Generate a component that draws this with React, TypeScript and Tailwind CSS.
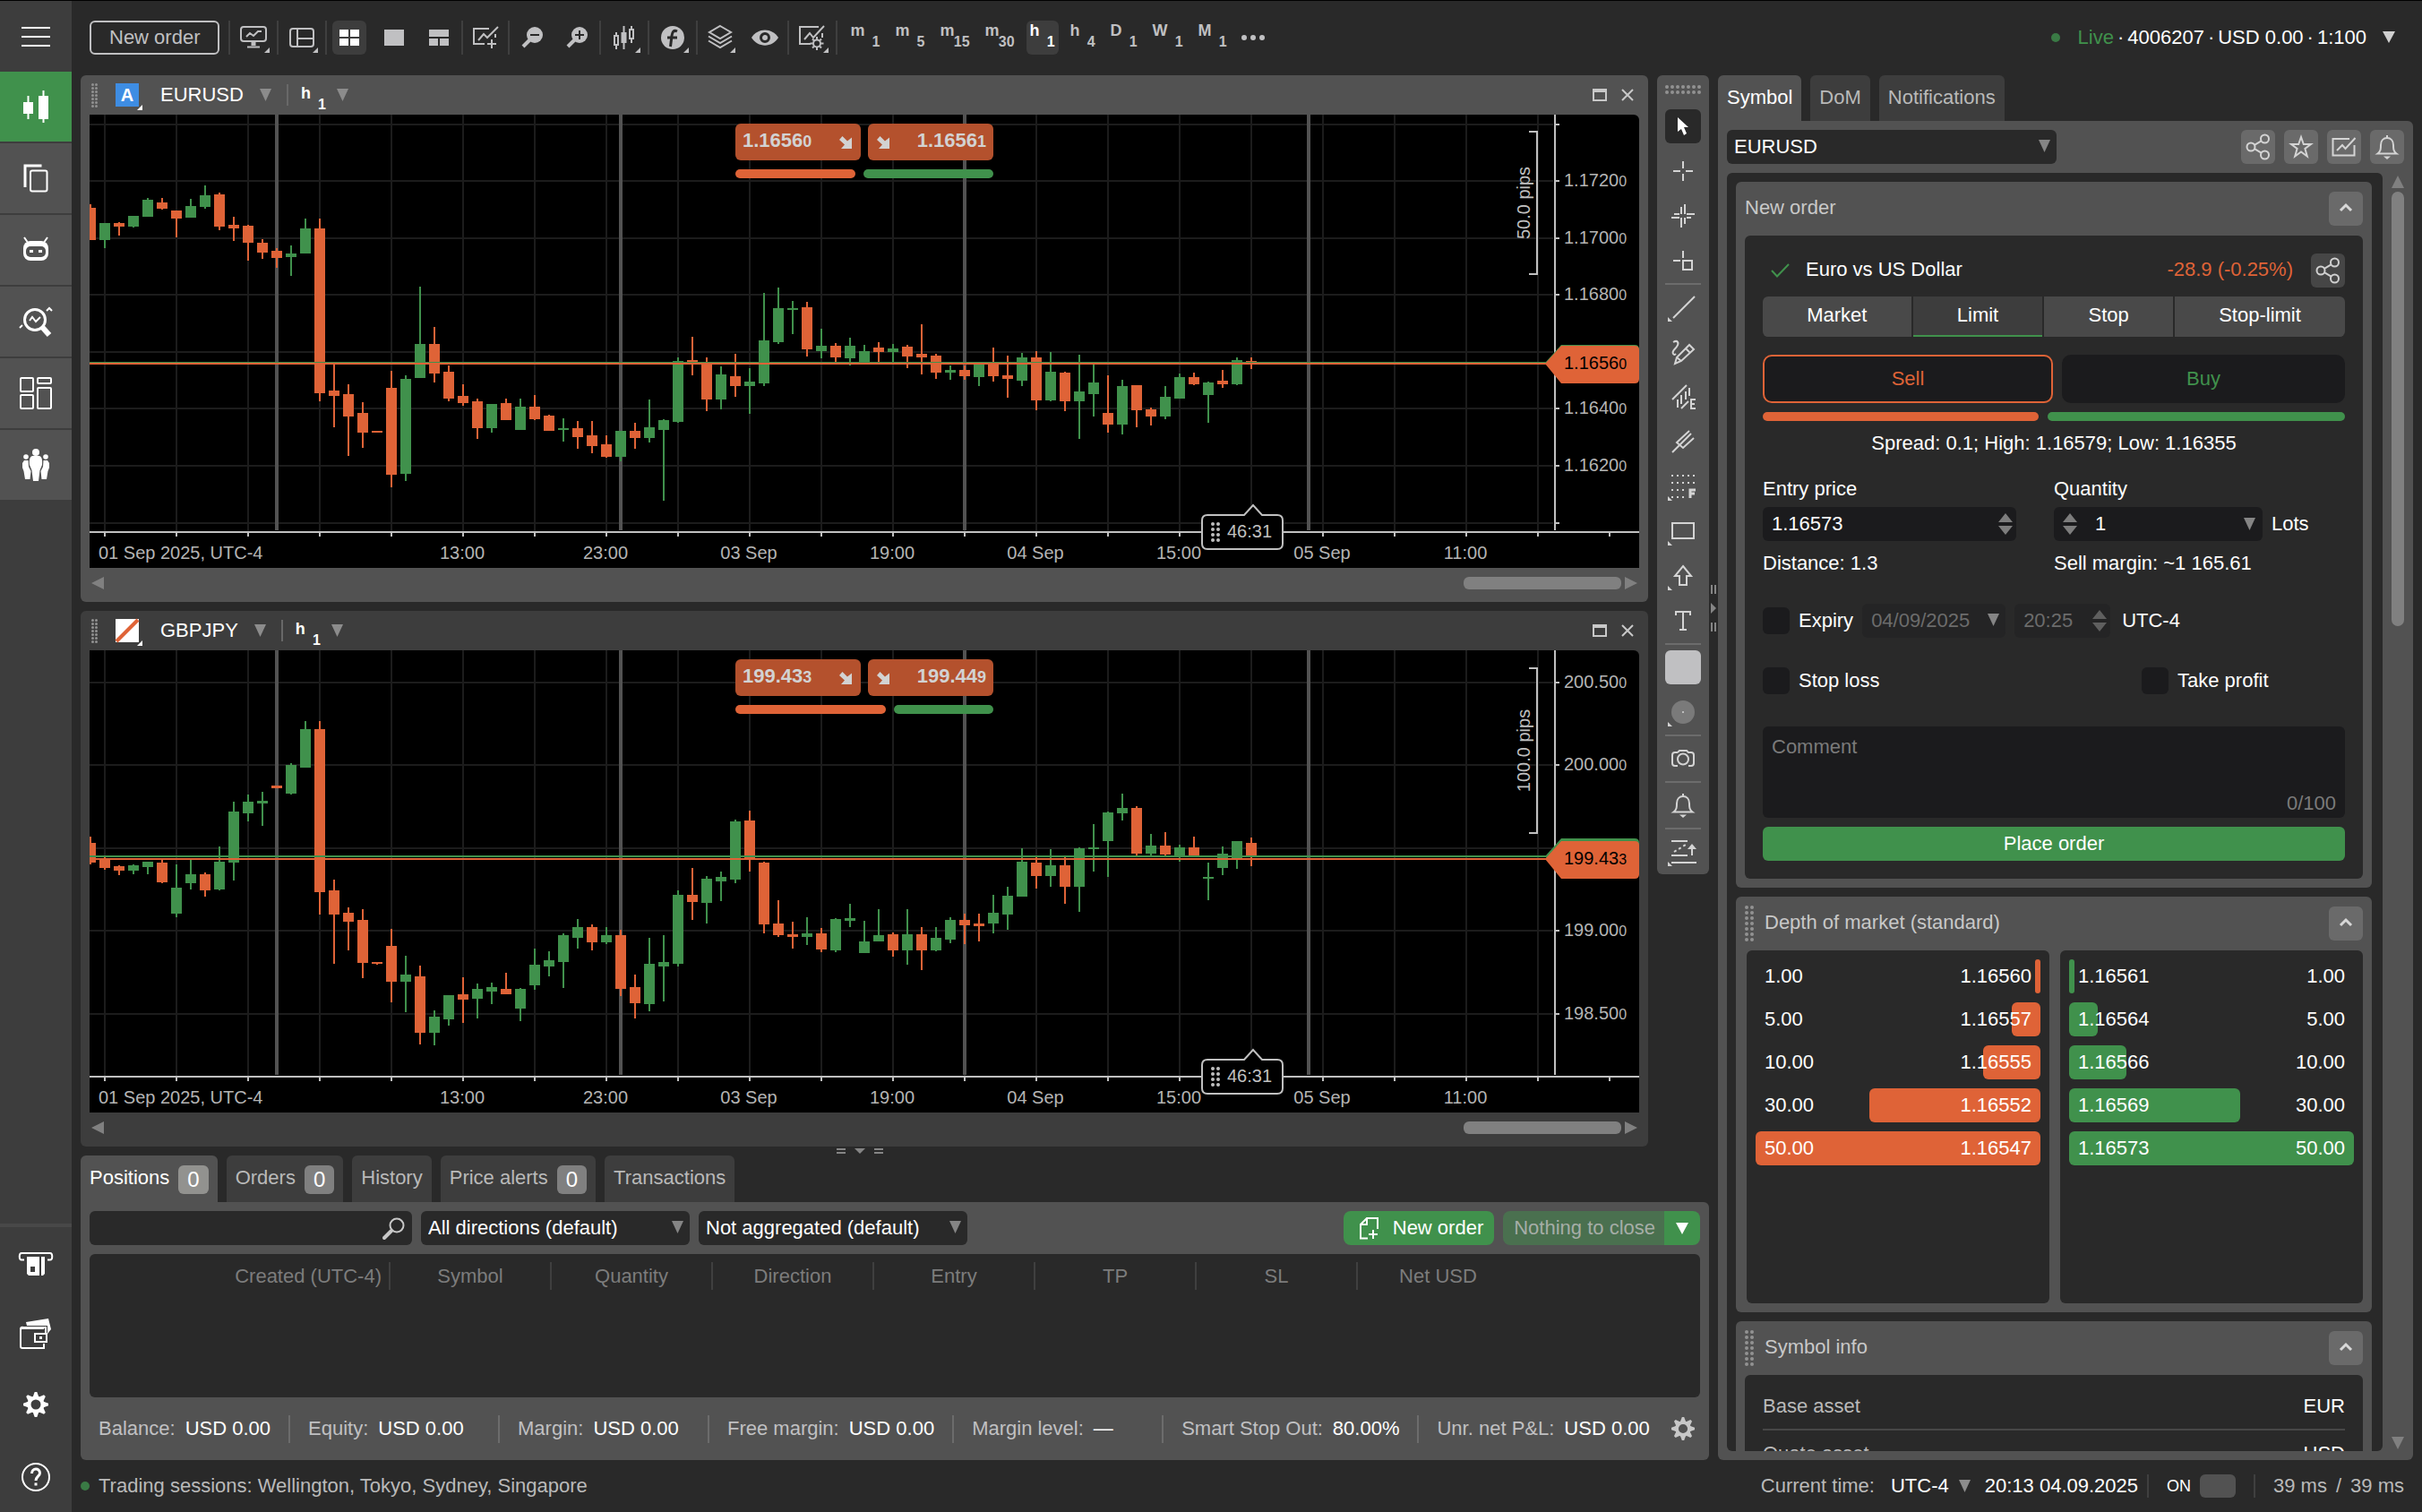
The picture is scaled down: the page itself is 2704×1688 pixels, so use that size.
import React from "react";

/* ------------------------------------------------------------------ */
/* Small shared pieces                                                 */
/* ------------------------------------------------------------------ */

type SvgProps = {
  w: number;
  h: number;
  children: React.ReactNode;
  className?: string;
  sw?: number;
};

function Svg({ w, h, children, className = "", sw = 2 }: SvgProps) {
  return (
    <svg
      width={w}
      height={h}
      viewBox={`0 0 ${w} ${h}`}
      fill="none"
      stroke="currentColor"
      strokeWidth={sw}
      aria-hidden="true"
      className={`shrink-0 overflow-visible ${className}`}
    >
      {children}
    </svg>
  );
}

function Caret({ className = "text-[#8c8c8c]" }: { className?: string }) {
  return (
    <Svg w={13} h={14} className={className}>
      <path d="M0 0H13L6.5 14Z" fill="currentColor" stroke="none" />
    </Svg>
  );
}

function Stepper({ className = "text-[#7d7d7d]" }: { className?: string }) {
  return (
    <Svg w={16} h={24} className={className}>
      <path d="M0 10L8 0L16 10ZM0 14H16L8 24Z" fill="currentColor" stroke="none" />
    </Svg>
  );
}

function Dots({ cols, rows, step, r }: { cols: number; rows: number; step: number; r: number }) {
  const items = [];
  for (let c = 0; c < cols; c++) {
    for (let i = 0; i < rows; i++) {
      items.push(<circle key={`${c}-${i}`} cx={r + c * step} cy={r + i * step} r={r} fill="currentColor" stroke="none" />);
    }
  }
  return (
    <Svg w={(cols - 1) * step + 2 * r} h={(rows - 1) * step + 2 * r} className="text-[#929292]">
      {items}
    </Svg>
  );
}

/* ------------------------------------------------------------------ */
/* Icons                                                               */
/* ------------------------------------------------------------------ */

const ShareIcon = () => (
  <Svg w={26} h={28}>
    <circle cx="20.5" cy="5" r="4.5" />
    <circle cx="5" cy="14" r="4.5" />
    <circle cx="20.5" cy="23" r="4.5" />
    <path d="M9 11.8L16.5 7.3M9 16.2L16.5 20.7" />
  </Svg>
);

const StarIcon = () => (
  <Svg w={26} h={26}>
    <path d="M13 2L15.8 10H24L17.4 15L19.8 23.5L13 18.5L6.2 23.5L8.6 15L2 10H10.2Z" />
  </Svg>
);

const ChartIcon = () => (
  <Svg w={28} h={22}>
    <path d="M20 2H1.500V20.500H25.500V9" />
    <path d="M6 15L12 9L15.500 13L26.500 1" />
  </Svg>
);

const BellIcon = () => (
  <Svg w={24} h={28}>
    <path d="M12 1V4" />
    <path d="M1.500 21.500C5 19 5 16 5 12C5 7 8 4 12 4S19 7 19 12C19 16 19 19 22.500 21.500Z" />
    <path d="M8 24.500H16L12 28Z" fill="currentColor" stroke="none" />
  </Svg>
);

const GearIcon = ({ size = 28 }: { size?: number }) => (
  <svg
    width={size}
    height={size}
    viewBox="0 0 28 28"
    aria-hidden="true"
    fill="none"
    stroke="currentColor"
    className="shrink-0"
  >
    <circle cx="14" cy="14" r="7.500" strokeWidth="4" />
    {[0, 45, 90, 135, 180, 225, 270, 315].map((a) => (
      <path key={a} d="M10.500 6L12.700 0H15.300L17.500 6Z" fill="currentColor" stroke="none" transform={`rotate(${a} 14 14)`} />
    ))}
  </svg>
);

const ChevronUp = () => (
  <Svg w={14} h={10} sw={3}>
    <path d="M1 9L7 3L13 9" />
  </Svg>
);

const zigzagFrame = (
  <>
    <path d="M22 2H1V21H13" />
    <path d="M6 16L12 9L16 14L28 1" />
    <path d="M26 9V14" />
  </>
);

const toolbarIcons = {
  monitor: (
    <Svg w={30} h={25}>
      <rect x="1" y="1" width="28" height="16" rx="3" />
      <path d="M7 12L11 8L15 11L20 6L24 6" />
      <path d="M15 17V22" strokeWidth="5" />
      <path d="M8 23.500H22" />
    </Svg>
  ),
  layout: (
    <Svg w={28} h={22}>
      <rect x="1" y="1" width="26" height="20" rx="3" />
      <path d="M9 1V21M9 12H27" />
    </Svg>
  ),
  grid: (
    <Svg w={22} h={18}>
      <path d="M0 0H10V8H0ZM12 0H22V8H12ZM0 10H10V18H0ZM12 10H22V18H12Z" fill="currentColor" stroke="none" />
    </Svg>
  ),
  single: (
    <Svg w={22} h={18}>
      <path d="M0 0H22V18H0Z" fill="currentColor" stroke="none" />
    </Svg>
  ),
  split: (
    <Svg w={22} h={18}>
      <path d="M0 0H22V8H0ZM0 10H10V18H0ZM12 10H22V18H12Z" fill="currentColor" stroke="none" />
    </Svg>
  ),
  chartAdd: (
    <Svg w={29} h={25}>
      <path d="M18 3H1V20H13" />
      <path d="M6 16L12 9L16 13L28 1" />
      <path d="M25 9V13M21 15V25M16 20H26" />
    </Svg>
  ),
  zoomOut: (
    <Svg w={24} h={24}>
      <circle cx="15" cy="9" r="9" fill="currentColor" stroke="none" />
      <path d="M10 14L2 22" strokeWidth="4" />
      <path d="M10 9H20" className="stroke-[#292929]" />
    </Svg>
  ),
  zoomIn: (
    <Svg w={24} h={24}>
      <circle cx="15" cy="9" r="9" fill="currentColor" stroke="none" />
      <path d="M10 14L2 22" strokeWidth="4" />
      <path d="M10 9H20M15 4V14" className="stroke-[#292929]" />
    </Svg>
  ),
  candles: (
    <Svg w={24} h={26}>
      <path d="M3 7V12M3 22V26M11.500 0V26M20 0V4M20 14V19" />
      <rect x="1" y="11" width="4" height="10" />
      <rect x="8.500" y="7" width="6" height="12" fill="currentColor" stroke="none" />
      <rect x="18" y="4" width="4" height="10" />
    </Svg>
  ),
  indicator: (
    <Svg w={28} h={28}>
      <circle cx="14" cy="14" r="13" fill="currentColor" stroke="none" />
      <path d="M19 7C15 5 13.500 8 13 12L11.500 24M8 14H19" className="stroke-[#292929]" strokeWidth="3" />
    </Svg>
  ),
  layers: (
    <Svg w={28} h={27}>
      <path d="M14 1L26 8L14 15L2 8Z" />
      <path d="M1 12.500L14 20L27 12.500M1 17.500L14 25L27 17.500" />
    </Svg>
  ),
  eye: (
    <Svg w={30} h={18}>
      <path d="M0 9C7 -2.500 23 -2.500 30 9C23 20.500 7 20.500 0 9Z" fill="currentColor" stroke="none" />
      <circle cx="15" cy="9" r="4.500" className="stroke-[#292929]" strokeWidth="3" />
    </Svg>
  ),
  chartGear: (
    <Svg w={30} h={27}>
      {zigzagFrame}
      <circle cx="20" cy="20.500" r="4" />
      <path d="M20 13V16M20 25V28M12.500 20.500H15.500M24.500 20.500H27.500M15 15.500L17 17.500M25 15.500L23 17.500M15 25.500L17 23.500M25 25.500L23 23.500" />
    </Svg>
  ),
};

/* ------------------------------------------------------------------ */
/* Left sidebar                                                        */
/* ------------------------------------------------------------------ */

const sideTop: { label: string; icon: React.ReactNode; active?: boolean }[] = [
  {
    label: "Trade",
    active: true,
    icon: (
      <Svg w={28} h={36}>
        <path d="M0 13H11V26H0ZM17 6H28V32H17Z" fill="currentColor" stroke="none" />
        <path d="M5.500 6V32M22.500 0V36" />
      </Svg>
    ),
  },
  {
    label: "Copy",
    icon: (
      <Svg w={28} h={32} sw={3}>
        <path d="M20.500 2H2V26" />
        <rect x="8" y="7.500" width="18.500" height="23" rx="2" strokeWidth="2" />
      </Svg>
    ),
  },
  {
    label: "Algo",
    icon: (
      <Svg w={28} h={28}>
        <path d="M1 0L4.500 5M27 0L23.500 5" />
        <rect x="0" y="4" width="28" height="22" rx="8" fill="currentColor" stroke="none" />
        <rect x="3" y="10" width="22" height="12" rx="5" className="fill-[#525252]" stroke="none" />
        <path d="M7 14H11V17H7ZM17 14H21V17H17Z" fill="currentColor" stroke="none" />
      </Svg>
    ),
  },
  {
    label: "Analyze",
    icon: (
      <Svg w={38} h={32}>
        <circle cx="18" cy="14" r="11.500" strokeWidth="3" />
        <path d="M26 22L34 31" strokeWidth="6" />
        <path d="M12 15L15 11L19 16L24 11" />
        <path d="M31 4L34 1L37 4M1 23L4 20" />
      </Svg>
    ),
  },
  {
    label: "Layouts",
    icon: (
      <Svg w={36} h={36}>
        <rect x="1" y="1" width="14" height="15" rx="1" />
        <rect x="20" y="1" width="15" height="6" rx="1" />
        <rect x="1" y="20" width="14" height="15" rx="1" />
        <rect x="20" y="12" width="15" height="23" rx="1" />
      </Svg>
    ),
  },
  {
    label: "Community",
    icon: (
      <Svg w={30} h={36}>
        <g fill="currentColor" stroke="none">
          <circle cx="15" cy="4" r="4" />
          <path d="M11 8H19C22 9 22.500 13 22 18L19.500 24L18 36H12L10.500 24L8 18C7.500 13 8 9 11 8Z" />
          <circle cx="4" cy="9" r="2.800" />
          <path d="M2 13H6.500L7 20L9.500 25L8.500 34H3L1.500 25L0 21V16Z" />
          <circle cx="26" cy="9" r="2.800" />
          <path d="M28 13H23.500L23 20L20.500 25L21.500 34H27L28.500 25L30 21V16Z" />
        </g>
      </Svg>
    ),
  },
];

const sideBottom: { label: string; icon: React.ReactNode; cls: string }[] = [
  {
    label: "Deposit",
    cls: "h-[82px]",
    icon: (
      <Svg w={38} h={27}>
        <path d="M6 8.500H3C0 8.500 0 1 3 1H35C38 1 38 8.500 35 8.500H32" />
        <path d="M9 5H23V26H11L9 24ZM25 5H29V24L27 26H25Z" fill="currentColor" stroke="none" />
        <path d="M13 16H18V22H13Z" className="fill-[#3d3d3d]" stroke="none" />
      </Svg>
    ),
  },
  {
    label: "Wallet",
    cls: "h-[74px]",
    icon: (
      <Svg w={36} h={34}>
        <path d="M26 10V11H2.500C1 11 1 12 1 13V31C1 33 2 33 3 33H27V28" />
        <path d="M1 12C1 9 3 10 6 10H29V17" />
        <rect x="17" y="17" width="13" height="9" />
        <path d="M22 20H25V23H22Z" fill="currentColor" stroke="none" />
        <path d="M7 4L32 0L35 12L31 17V8H8Z" fill="currentColor" stroke="none" />
      </Svg>
    ),
  },
  { label: "Settings", cls: "h-[84px]", icon: <GearIcon /> },
  {
    label: "Help",
    cls: "h-[78px]",
    icon: (
      <Svg w={32} h={32}>
        <circle cx="16" cy="16" r="15" />
        <path d="M11.500 12C11.500 5.500 20.500 5.500 20.500 11.500C20.500 15 16 15.500 16 20" strokeWidth="3" />
        <path d="M14.500 22.500H17.500V25.500H14.500Z" fill="currentColor" stroke="none" />
      </Svg>
    ),
  },
];

function Sidebar() {
  return (
    <aside className="flex w-20 shrink-0 flex-col bg-[#3d3d3d] text-white">
      <button aria-label="Menu" className="flex h-[79px] items-center justify-center">
        <Svg w={32} h={24}>
          <path d="M0 2H32M0 12H32M0 22H32" />
        </Svg>
      </button>
      <nav className="flex flex-col gap-[2px]">
        {sideTop.map((s) => (
          <button
            key={s.label}
            aria-label={s.label}
            className={`flex h-[78px] items-center justify-center ${s.active ? "bg-[#40914c]" : "bg-[#525252]"}`}
          >
            {s.icon}
          </button>
        ))}
      </nav>
      <nav className="mt-auto flex flex-col border-t-4 border-[#484848]">
        {sideBottom.map((s) => (
          <button key={s.label} aria-label={s.label} className={`flex items-center justify-center ${s.cls}`}>
            {s.icon}
          </button>
        ))}
      </nav>
    </aside>
  );
}

/* ------------------------------------------------------------------ */
/* Top toolbar                                                         */
/* ------------------------------------------------------------------ */

type IconName = keyof typeof toolbarIcons;

const toolbarGroups: { name: IconName; label: string; menu?: boolean; wide?: boolean; active?: boolean }[][] = [
  [{ name: "monitor", label: "Workspaces", menu: true, wide: true }],
  [{ name: "layout", label: "Panels", menu: true, wide: true }],
  [
    { name: "grid", label: "Multi-chart", active: true },
    { name: "single", label: "Single chart" },
    { name: "split", label: "Free charts" },
  ],
  [{ name: "chartAdd", label: "Add chart" }],
  [
    { name: "zoomOut", label: "Zoom out" },
    { name: "zoomIn", label: "Zoom in" },
  ],
  [{ name: "candles", label: "Chart type", menu: true, wide: true }],
  [{ name: "indicator", label: "Indicators", menu: true, wide: true }],
  [
    { name: "layers", label: "Objects", menu: true },
    { name: "eye", label: "Visibility" },
  ],
  [{ name: "chartGear", label: "Chart settings", menu: true, wide: true }],
];

const timeframes: [string, string][] = [
  ["m", "1"],
  ["m", "5"],
  ["m", "15"],
  ["m", "30"],
  ["h", "1"],
  ["h", "4"],
  ["D", "1"],
  ["W", "1"],
  ["M", "1"],
];

function Timeframe({ unit, count }: { unit: string; count: string }) {
  return (
    <span className="flex h-[38px] items-start font-bold leading-5">
      <span className="mt-px text-[18px]">{unit}</span>
      <span className="mt-[14px] flex w-[17px] justify-end text-[16px]">{count}</span>
    </span>
  );
}

function CornerMark() {
  return (
    <Svg w={6} h={6} className="absolute bottom-[2px] right-[2px]">
      <path d="M6 0V6H0Z" fill="currentColor" stroke="none" />
    </Svg>
  );
}

function Separator() {
  return <span className="h-[38px] w-[2px] shrink-0 bg-[#3f3f3f]" />;
}

function TopBar() {
  return (
    <header className="flex h-[83px] shrink-0 items-center pb-[2px] pl-5 pr-[30px] text-[#c0c0c2]">
      <button className="h-[38px] rounded-md border-2 border-[#c0c0c2] px-5">New order</button>
      <div className="ml-[10px] flex items-center gap-[6px]">
        {toolbarGroups.map((group, i) => (
          <React.Fragment key={i}>
            <Separator />
            <div className="flex gap-3">
              {group.map((b) => (
                <button
                  key={b.name}
                  aria-label={b.label}
                  className={`relative flex h-[38px] items-center justify-center rounded-md ${b.wide ? "w-10" : "w-[38px]"} ${
                    b.active ? "bg-[#3d3d3d] text-white" : ""
                  }`}
                >
                  {toolbarIcons[b.name]}
                  {b.menu && <CornerMark />}
                </button>
              ))}
            </div>
          </React.Fragment>
        ))}
        <Separator />
      </div>
      <div className="ml-[10px] flex items-center gap-[9px]">
        {timeframes.map(([unit, count]) => {
          const active = unit === "h" && count === "1";
          return (
            <button key={unit + count} className={`rounded-md px-1 ${active ? "bg-[#3d3d3d] text-white" : ""}`}>
              <Timeframe unit={unit} count={count} />
            </button>
          );
        })}
        <button aria-label="More timeframes" className="flex h-[38px] w-8 items-center justify-center">
          <Svg w={26} h={6}>
            <path d="M3 3h.01M13 3h.01M23 3h.01" strokeWidth="6" strokeLinecap="round" />
          </Svg>
        </button>
      </div>
      <button className="ml-auto flex items-center gap-1 text-white">
        <span className="mr-4 size-[10px] rounded-full bg-[#3a7a45]" />
        <span className="text-[#40914c]">Live</span>
        <span>·</span>
        <span>4006207</span>
        <span>·</span>
        <span>USD 0.00</span>
        <span>·</span>
        <span>1:100</span>
        <Svg w={14} h={13} className="ml-[14px] text-[#d0d0d0]">
          <path d="M0 0H14L7 13Z" fill="currentColor" stroke="none" />
        </Svg>
      </button>
    </header>
  );
}

/* ------------------------------------------------------------------ */
/* Charts                                                              */
/* ------------------------------------------------------------------ */

/* direction, high, body top, body bottom, low: scale steps below the origin */
type Candle = ["u" | "d", number, number, number, number];

const STEPS_PER_PIXEL = 2.8;

const eurusd: Candle[] = [
  ["d", 302, 314, 414, 414], ["u", 361, 361, 414, 440], ["d", 358, 361, 372, 400], ["u", 339, 339, 372, 375],
  ["u", 283, 288, 342, 342], ["d", 283, 297, 316, 319], ["d", 322, 322, 347, 406], ["u", 286, 308, 344, 344],
  ["u", 244, 274, 311, 316], ["d", 266, 272, 372, 384], ["d", 342, 367, 378, 417], ["d", 367, 370, 423, 479],
  ["d", 412, 423, 454, 473], ["d", 440, 448, 470, 501], ["u", 431, 456, 468, 526], ["u", 347, 378, 456, 456],
  ["d", 347, 378, 893, 918], ["d", 800, 885, 902, 1000], ["d", 865, 896, 966, 1089], ["d", 921, 955, 1016, 1064],
  ["d", 1011, 1011, 1016, 1016], ["d", 823, 876, 1148, 1187], ["u", 837, 848, 1145, 1168], ["u", 560, 739, 846, 846],
  ["d", 686, 739, 832, 860], ["d", 806, 826, 910, 918], ["d", 865, 902, 924, 932], ["d", 910, 918, 1002, 1036],
  ["u", 927, 927, 1002, 1016], ["d", 910, 924, 977, 977], ["u", 910, 935, 1008, 1008], ["d", 899, 935, 974, 977],
  ["d", 960, 963, 1011, 1011], ["u", 972, 1002, 1008, 1044], ["d", 980, 1002, 1030, 1067], ["d", 980, 1025, 1058, 1081],
  ["d", 1025, 1053, 1092, 1095], ["u", 1011, 1011, 1092, 1106], ["d", 986, 1011, 1033, 1067], ["u", 913, 1000, 1033, 1047],
  ["u", 974, 977, 1008, 1229], ["u", 781, 792, 983, 986], ["d", 717, 790, 797, 837], ["d", 781, 797, 913, 949],
  ["u", 809, 834, 913, 944], ["d", 770, 840, 871, 904], ["u", 815, 857, 871, 958], ["u", 580, 728, 862, 871],
  ["u", 563, 627, 734, 739], ["u", 605, 627, 633, 708], ["d", 608, 624, 756, 778], ["u", 692, 745, 762, 784],
  ["d", 736, 745, 781, 795], ["u", 720, 745, 784, 806], ["u", 742, 762, 800, 800], ["d", 734, 750, 764, 795],
  ["u", 739, 753, 764, 797], ["d", 742, 748, 778, 815], ["d", 678, 770, 781, 834], ["d", 770, 776, 829, 848],
  ["u", 806, 820, 829, 851], ["d", 806, 820, 840, 851], ["u", 800, 800, 843, 871], ["d", 750, 800, 840, 857],
  ["d", 776, 837, 848, 907], ["u", 767, 781, 854, 871], ["d", 762, 781, 916, 946], ["u", 764, 826, 916, 918],
  ["d", 826, 829, 918, 949], ["u", 773, 888, 918, 1036], ["u", 804, 860, 896, 966], ["d", 837, 955, 991, 1016],
  ["u", 851, 871, 991, 1022], ["d", 868, 868, 946, 1000], ["d", 938, 944, 966, 994], ["u", 871, 904, 966, 974],
  ["u", 832, 843, 910, 910], ["d", 829, 843, 865, 868], ["u", 857, 860, 899, 986], ["d", 820, 854, 865, 876],
  ["u", 781, 790, 865, 868], ["d", 781, 792, 795, 818],
];

const gbpjpy: Candle[] = [
  ["d", 599, 619, 680, 686], ["d", 664, 669, 697, 703], ["d", 689, 692, 706, 720], ["u", 686, 689, 706, 717],
  ["u", 678, 678, 694, 717], ["d", 672, 680, 742, 745], ["u", 686, 759, 840, 851], ["u", 672, 717, 745, 764],
  ["d", 711, 717, 767, 787], ["u", 630, 678, 764, 767], ["u", 490, 521, 680, 736], ["u", 468, 490, 526, 552],
  ["u", 459, 487, 496, 566], ["d", 440, 440, 448, 448], ["u", 370, 375, 465, 468], ["u", 238, 263, 384, 384],
  ["d", 238, 263, 773, 843], ["d", 734, 767, 843, 997], ["d", 820, 837, 865, 955], ["d", 826, 860, 994, 1042],
  ["d", 991, 991, 997, 1000], ["d", 888, 941, 1053, 1117], ["u", 972, 1030, 1053, 1148], ["d", 1002, 1036, 1212, 1249],
  ["u", 1142, 1162, 1212, 1252], ["u", 1095, 1095, 1170, 1190], ["d", 1039, 1092, 1109, 1182], ["u", 1058, 1075, 1106, 1168],
  ["u", 1056, 1070, 1084, 1123], ["d", 1025, 1075, 1092, 1092], ["u", 1072, 1075, 1137, 1176], ["u", 949, 1000, 1064, 1078],
  ["u", 958, 986, 1005, 1036], ["u", 902, 907, 991, 1072], ["u", 857, 882, 916, 949], ["d", 874, 882, 930, 955],
  ["u", 882, 907, 930, 935], ["d", 890, 907, 1075, 1098], ["d", 1030, 1070, 1120, 1168], ["u", 916, 997, 1123, 1145],
  ["u", 907, 991, 1005, 1114], ["u", 767, 781, 997, 1005], ["d", 697, 781, 804, 860], ["u", 722, 731, 806, 871],
  ["u", 708, 725, 739, 801], ["u", 546, 552, 734, 745], ["d", 518, 549, 672, 708], ["d", 678, 680, 874, 902],
  ["d", 798, 871, 907, 913], ["d", 865, 904, 913, 949], ["u", 851, 902, 913, 938], ["d", 885, 902, 952, 960],
  ["u", 854, 857, 955, 960], ["u", 809, 854, 862, 882], ["u", 862, 927, 963, 963], ["u", 826, 907, 927, 927],
  ["d", 899, 904, 955, 974], ["u", 826, 904, 955, 1000], ["d", 882, 904, 955, 1016], ["u", 882, 916, 955, 958],
  ["u", 851, 860, 921, 932], ["d", 840, 860, 876, 935], ["d", 840, 871, 879, 927], ["u", 781, 837, 871, 902],
  ["u", 756, 784, 843, 890], ["u", 636, 678, 787, 787], ["d", 664, 680, 722, 762], ["u", 638, 689, 722, 756],
  ["d", 664, 689, 756, 809], ["u", 633, 636, 756, 834], ["u", 560, 633, 637, 708], ["u", 521, 524, 613, 725],
  ["u", 465, 510, 526, 549], ["d", 504, 510, 652, 658], ["u", 591, 627, 652, 664], ["d", 585, 627, 655, 664],
  ["u", 624, 633, 661, 678], ["d", 599, 633, 664, 664], ["u", 680, 725, 731, 798], ["u", 630, 652, 697, 720],
  ["u", 613, 613, 669, 700], ["d", 602, 619, 661, 692],
];

const timeLabels: [number, string][] = [
  [416, "13:00"],
  [576, "23:00"],
  [736, "03 Sep"],
  [896, "19:00"],
  [1056, "04 Sep"],
  [1216, "15:00"],
  [1376, "05 Sep"],
  [1536, "11:00"],
];

type ChartData = {
  symbol: string;
  height: number;
  origin: number;
  candles: Candle[];
  gridY: number[];
  priceLabels: [number, string][];
  askY: number;
  askH: number;
  bidY: number;
  tagTop: number;
  tagGreen: number;
  bid: string;
  ask: string;
  ruler: [number, number, string];
  sellShare: number;
};

const charts: ChartData[] = [
  {
    symbol: "EURUSD",
    height: 506,
    origin: 8,
    candles: eurusd,
    gridY: [11, 74, 138, 201, 265, 328, 392, 456],
    priceLabels: [[74, "1.17200"], [138, "1.17000"], [201, "1.16800"], [328, "1.16400"], [392, "1.16200"]],
    askY: 276,
    askH: 1,
    bidY: 277,
    tagTop: 258,
    tagGreen: 257,
    bid: "1.16560",
    ask: "1.16561",
    ruler: [19, 178, "50.0 pips"],
    sellShare: 48,
  },
  {
    symbol: "GBPJPY",
    height: 516,
    origin: 6,
    candles: gbpjpy,
    gridY: [36, 128, 221, 313, 406],
    priceLabels: [[36, "200.500"], [128, "200.000"], [313, "199.000"], [406, "198.500"]],
    askY: 229,
    askH: 2,
    bidY: 232,
    tagTop: 213,
    tagGreen: 210,
    bid: "199.433",
    ask: "199.449",
    ruler: [20, 204, "100.0 pips"],
    sellShare: 60,
  },
];

const tagPath = (top: number, bottom: number, tip: number) =>
  `M1625 ${tip}L1643 ${top}H1725Q1730 ${top} 1730 ${top + 5}V${bottom - 5}Q1730 ${bottom} 1725 ${bottom}H1643Z`;

function PriceText({ x, y, value, className }: { x: number; y: number; value: string; className: string }) {
  return (
    <text x={x} y={y} className={`text-[20px] ${className}`}>
      {value.slice(0, -1)}
      <tspan className="text-[16px]">{value.slice(-1)}</tspan>
    </text>
  );
}

function Plot({ c }: { c: ChartData }) {
  const axis = c.height - 40;
  const toY = (v: number) => Math.round(v / STEPS_PER_PIXEL - c.origin);
  const tip = c.bidY + 1;
  return (
    <svg viewBox={`0 0 1730 ${c.height}`} className="block h-auto w-full rounded-tr-md bg-black" role="img" aria-label={`${c.symbol} chart`}>
      {c.gridY.map((y) => (
        <g key={y}>
          <rect x={0} y={y - 1} width={1634} height={2} className="fill-[#1c1c1c]" />
          <rect x={1636} y={y - 1} width={5} height={2} className="fill-[#c0c0c0]" />
        </g>
      ))}
      {Array.from({ length: 22 }, (_, i) => 17 + i * 80).map((x) => (
        <g key={x}>
          {x < 1630 && <rect x={x - 1} y={0} width={2} height={axis} className="fill-[#1c1c1c]" />}
          <rect x={x - 1} y={axis} width={2} height={5} className="fill-[#c0c0c0]" />
        </g>
      ))}
      {[209, 593, 977, 1361].map((x) => (
        <rect key={x} x={x - 2} y={0} width={4} height={axis - 2} className="fill-[#525252]" />
      ))}
      {c.candles.map(([dir, hi, top, bottom, lo], i) => {
        const x = 1 + i * 16;
        return (
          <g key={i} className={dir === "u" ? "fill-[#40914c]" : "fill-[#df6337]"}>
            <rect x={x - 1} y={toY(hi)} width={2} height={Math.max(2, toY(lo) - toY(hi))} />
            <rect x={x - 6} y={toY(top)} width={12} height={Math.max(2, toY(bottom) - toY(top))} />
          </g>
        );
      })}
      <rect x={0} y={c.askY} width={1628} height={c.askH} className="fill-[#40914c]" />
      <rect x={0} y={c.bidY} width={1628} height={2} className="fill-[#df6337]" />
      <rect x={0} y={axis - 1} width={1730} height={2} className="fill-[#c0c0c0]" />
      <rect x={1635} y={0} width={2} height={axis - 2} className="fill-[#c0c0c0]" />

      <g className="fill-[#b4b4b4]">
        <text x={10} y={axis + 30} className="text-[20px]">
          01 Sep 2025, UTC-4
        </text>
        {timeLabels.map(([x, t]) => (
          <text key={x} x={x} y={axis + 30} textAnchor="middle" className="text-[20px]">
            {t}
          </text>
        ))}
      </g>
      {c.priceLabels.map(([y, v]) => (
        <PriceText key={y} x={1646} y={y + 6} value={v} className="fill-[#b4b4b4]" />
      ))}

      <path
        d={`M1607 ${c.ruler[0]}H1616V${c.ruler[1]}H1607`}
        fill="none"
        strokeWidth={2}
        className="stroke-[#c0c0c0]"
      />
      <text
        transform={`translate(1608 ${(c.ruler[0] + c.ruler[1]) / 2}) rotate(-90)`}
        textAnchor="middle"
        className="fill-[#c0c0c0] text-[20px]"
      >
        {c.ruler[2]}
      </text>

      <path d={tagPath(c.tagGreen, c.tagTop + 38, c.askY + 1)} className="fill-[#40914c]" />
      <path d={tagPath(c.tagTop, c.tagTop + 42, tip)} className="fill-[#df6337]" />
      <PriceText x={1646} y={tip + 6} value={c.bid} className="fill-black" />

      <path
        d={`M1248 ${axis - 19}H1289L1299 ${axis - 30}L1309 ${axis - 19}H1326Q1332 ${axis - 19} 1332 ${axis - 13}V${axis + 13}Q1332 ${
          axis + 19
        } 1326 ${axis + 19}H1248Q1242 ${axis + 19} 1242 ${axis + 13}V${axis - 13}Q1242 ${axis - 19} 1248 ${axis - 19}Z`}
        strokeWidth={2}
        className="fill-black stroke-[#c0c0c0]"
      />
      {[1254, 1260].map((x) =>
        [-9, -3, 3, 9].map((dy) => <circle key={`${x}${dy}`} cx={x} cy={axis + dy} r={2} className="fill-[#c0c0c0]" />),
      )}
      <text x={1270} y={axis + 6} className="fill-[#c0c0c0] text-[20px]">
        46:31
      </text>
    </svg>
  );
}

function QuoteArrow() {
  return (
    <Svg w={14} h={14}>
      <path d="M3.500 0L9 5.500L14 1.500V14H2L6 9.500L0 4Z" fill="currentColor" stroke="none" />
    </Svg>
  );
}

function QuoteValue({ value }: { value: string }) {
  return (
    <span className="font-bold">
      {value.slice(0, -1)}
      <span className="text-[18px]">{value.slice(-1)}</span>
    </span>
  );
}

function ChartWindow({ c, active }: { c: ChartData; active: boolean }) {
  return (
    <section className={`rounded-md px-[10px] ${active ? "bg-[#525252]" : "bg-[#3d3d3d]"}`}>
      <div className="flex h-11 items-center pl-[2px] text-white">
        <Dots cols={2} rows={7} step={4} r={1.5} />
        <button aria-label={`${c.symbol} chart mode`} className="relative ml-5">
          {active ? (
            <span className="flex size-[26px] items-center justify-center bg-[#3e8de3] text-[20px] font-bold">A</span>
          ) : (
            <Svg w={26} h={26} sw={4}>
              <path d="M0 0H26V26H0Z" fill="#fff" stroke="none" />
              <path d="M1 25L25 1" className="stroke-[#df6337]" />
            </Svg>
          )}
          <Svg w={6} h={6} className="absolute -bottom-1 -right-1">
            <path d="M6 0V6H0Z" fill="currentColor" stroke="none" />
          </Svg>
        </button>
        <button className="ml-6 flex items-center gap-[18px] pb-px">
          <span>{c.symbol}</span>
          <Caret />
        </button>
        <span className="ml-[17px] h-6 w-[2px] bg-[#686868]" />
        <button className="ml-[14px] flex items-center gap-3">
          <span className="mt-[11px]">
            <Timeframe unit="h" count="1" />
          </span>
          <Caret />
        </button>
        <button aria-label={`Maximize ${c.symbol}`} className="ml-auto text-[#c8c8c8]">
          <Svg w={16} h={14}>
            <rect x="1" y="1" width="14" height="12" />
            <path d="M1 2.500H15" strokeWidth="3" />
          </Svg>
        </button>
        <button aria-label={`Close ${c.symbol}`} className="ml-4 mr-[6px] text-[#c8c8c8]">
          <Svg w={14} h={14}>
            <path d="M1 1L13 13M13 1L1 13" />
          </Svg>
        </button>
      </div>
      <div className="relative">
        <Plot c={c} />
        <div className="absolute left-1/2 top-[10px] w-72 -translate-x-1/2">
          <div className="flex gap-2 text-[#d2d2d2]">
            <button
              aria-label={`Sell ${c.symbol}`}
              className="flex h-[41px] flex-1 items-center justify-between rounded-md bg-[#b4512d] pb-[2px] pl-2 pr-[10px]"
            >
              <QuoteValue value={c.bid} />
              <span className="pt-[3px]">
                <QuoteArrow />
              </span>
            </button>
            <button
              aria-label={`Buy ${c.symbol}`}
              className="flex h-[41px] flex-1 items-center justify-between rounded-md bg-[#b4512d] pb-[2px] pl-[10px] pr-2"
            >
              <span className="pt-[3px]">
                <QuoteArrow />
              </span>
              <QuoteValue value={c.ask} />
            </button>
          </div>
          <div className="mt-[10px] flex gap-[9px]">
            <span className="h-[10px] rounded-full bg-[#df6337]" style={{ width: `${c.sellShare * 0.97}%` }} />
            <span className="h-[10px] flex-1 rounded-full bg-[#40914c]" />
          </div>
        </div>
      </div>
      <div className="flex h-[38px] items-start pl-[2px] pr-[2px] pt-[10px] text-[#808080]">
        <Svg w={14} h={14}>
          <path d="M14 0V14L0 7Z" fill="currentColor" stroke="none" />
        </Svg>
        <span className="ml-auto h-[14px] w-44 rounded-md bg-[#808080]" />
        <Svg w={14} h={14} className="ml-1">
          <path d="M0 0V14L14 7Z" fill="currentColor" stroke="none" />
        </Svg>
      </div>
    </section>
  );
}

/* ------------------------------------------------------------------ */
/* Drawing tools                                                       */
/* ------------------------------------------------------------------ */

type Tool = { label: string; icon: React.ReactNode; menu?: boolean; active?: boolean };

const toolGroups: Tool[][] = [
  [
    {
      label: "Cursor",
      active: true,
      icon: (
        <Svg w={14} h={20}>
          <path d="M1 0L13 11H8L11 18L8 20L5 13L1 16Z" fill="currentColor" stroke="none" />
        </Svg>
      ),
    },
    {
      label: "Crosshair",
      icon: (
        <Svg w={22} h={22}>
          <path d="M11 0V8M11 14V22M0 11H8M14 11H22" />
        </Svg>
      ),
    },
    {
      label: "Synced crosshair",
      icon: (
        <Svg w={26} h={26}>
          <path d="M11 3V11M11 15V26M15 0V11M15 15V22M0 15H9M17 15H22M3 11H9M17 11H26" />
        </Svg>
      ),
    },
    {
      label: "Crosshair with box",
      icon: (
        <Svg w={22} h={22}>
          <path d="M11 0V8M0 11H8" />
          <rect x="11" y="11" width="10" height="10" />
        </Svg>
      ),
    },
  ],
  [
    {
      label: "Line",
      menu: true,
      icon: (
        <Svg w={26} h={26}>
          <path d="M2 25L26 1" />
        </Svg>
      ),
    },
    {
      label: "Pencil",
      icon: (
        <Svg w={26} h={28}>
          <path d="M2 3C7 0 9 4 6 8C4 11 0 13 2 16C3 17.500 4 17 5 16" />
          <path d="M4 27L6 20L20 6L25 11L11 24ZM6 20L11 24M16 10L21 15" />
        </Svg>
      ),
    },
    {
      label: "Equidistant channel",
      icon: (
        <Svg w={27} h={28}>
          <path d="M1 17L17 1M11 27L19 19" />
          <path d="M7 17V26M11 12V22M16 8V17M20 4V13" />
          <path d="M27 17H22V27H27M22 22H26" />
        </Svg>
      ),
    },
    {
      label: "Pitchfork",
      icon: (
        <Svg w={26} h={26}>
          <path d="M1 25L22 4M20 1L6 14L13 20L25 9M10 16L20 6" />
        </Svg>
      ),
    },
    {
      label: "Fibonacci",
      menu: true,
      icon: (
        <Svg w={27} h={28}>
          <path d="M0 2H27M0 10H27" strokeDasharray="2 4" />
          <path d="M0 18H16M0 26H16" strokeDasharray="2 4" />
          <path d="M21 27V18H27M21 22H26" strokeWidth="3" />
        </Svg>
      ),
    },
    {
      label: "Rectangle",
      menu: true,
      icon: (
        <Svg w={26} h={20}>
          <rect x="1" y="1" width="24" height="17" />
        </Svg>
      ),
    },
    {
      label: "Arrow",
      menu: true,
      icon: (
        <Svg w={22} h={24}>
          <path d="M11 1L20 12H15V22H7V12H2Z" />
        </Svg>
      ),
    },
    {
      label: "Text",
      icon: (
        <Svg w={18} h={22}>
          <path d="M1 5V1H17V5M9 1V21M5 21H13" />
        </Svg>
      ),
    },
  ],
  [
    { label: "Color", icon: <span className="h-[38px] w-10 rounded-md bg-[#c0c0c2]" /> },
    {
      label: "Line style",
      menu: true,
      icon: (
        <Svg w={26} h={26}>
          <circle cx="13" cy="13" r="13" fill="#7a7a7a" stroke="none" />
          <circle cx="13" cy="13" r="1" fill="currentColor" stroke="none" />
        </Svg>
      ),
    },
  ],
  [
    {
      label: "Snapshot",
      icon: (
        <Svg w={26} h={20}>
          <path d="M7 3L9 1H17L19 3H22C24.500 3 25 4 25 6V15C25 17 24 18 22 18H19M7 18H4C2 18 1 17 1 15V6C1 4 2 3 4 3H7" />
          <circle cx="13" cy="10.500" r="6" />
        </Svg>
      ),
    },
  ],
  [{ label: "Price alert", icon: <BellIcon /> }],
  [
    {
      label: "Order levels",
      menu: true,
      icon: (
        <Svg w={30} h={28}>
          <path d="M2 2H20M2 18H20M2 26H30" />
          <path d="M5 14L18 6" strokeDasharray="3 3" />
          <path d="M25 18V8" />
          <path d="M20 11L25 5L30 11Z" fill="currentColor" stroke="none" />
        </Svg>
      ),
    },
  ],
];

function ToolPalette() {
  return (
    <div role="toolbar" aria-label="Drawing tools" className="flex w-[58px] flex-col items-center self-start rounded-md bg-[#525252] pt-[11px] text-[#d4d4d4]">
      <Dots cols={7} rows={2} step={6} r={2} />
      <div className="mt-[11px] flex flex-col items-center">
        {toolGroups.map((group, i) => (
          <div key={i} className={`flex flex-col items-center ${i > 0 ? "border-t-2 border-[#6c6c6c]" : ""}`}>
            {group.map((t) => (
              <button key={t.label} aria-label={t.label} className="relative flex h-[50px] w-10 items-center justify-center">
                {t.active ? (
                  <span className="flex h-[38px] w-10 items-center justify-center rounded-md bg-[#292929] text-white">{t.icon}</span>
                ) : (
                  t.icon
                )}
                {t.menu && (
                  <Svg w={5} h={5} className="absolute bottom-[9px] left-[3px]">
                    <path d="M0 0V5H5Z" fill="currentColor" stroke="none" />
                  </Svg>
                )}
              </button>
            ))}
          </div>
        ))}
      </div>
    </div>
  );
}

/* ------------------------------------------------------------------ */
/* Trade watch                                                         */
/* ------------------------------------------------------------------ */

const watchTabs: { name: string; count?: number }[] = [
  { name: "Positions", count: 0 },
  { name: "Orders", count: 0 },
  { name: "History" },
  { name: "Price alerts", count: 0 },
  { name: "Transactions" },
];

const columns = ["Symbol", "Quantity", "Direction", "Entry", "TP", "SL", "Net USD"];

const summary: [string, string][] = [
  ["Balance:", "USD 0.00"],
  ["Equity:", "USD 0.00"],
  ["Margin:", "USD 0.00"],
  ["Free margin:", "USD 0.00"],
  ["Margin level:", "—"],
  ["Smart Stop Out:", "80.00%"],
  ["Unr. net P&L:", "USD 0.00"],
];

function Select({ label, value, className, disabled }: { label: string; value: string; className: string; disabled?: boolean }) {
  return (
    <div className={`relative h-[38px] rounded-md ${className}`}>
      <select
        aria-label={label}
        defaultValue={value}
        disabled={disabled}
        className="size-full appearance-none bg-transparent pl-2 outline-none"
      >
        <option>{value}</option>
      </select>
      <Caret className="pointer-events-none absolute right-[7px] top-[11px] text-[#858585]" />
    </div>
  );
}

function TradeWatch() {
  return (
    <section className="mr-[10px] flex min-h-0 flex-1 flex-col">
      <div role="tablist" className="flex gap-[10px]">
        {watchTabs.map((t, i) => (
          <button
            key={t.name}
            role="tab"
            aria-selected={i === 0}
            className={`flex h-[52px] items-center gap-[10px] rounded-t-md px-[10px] pb-[2px] ${
              i === 0 ? "bg-[#525252] text-white" : "bg-[#3d3d3d] text-[#b9b9b9]"
            }`}
          >
            {t.name}
            {t.count !== undefined && (
              <span
                className={`mt-[3px] flex h-8 items-center rounded-md px-[10px] text-[24px] text-white ${
                  i === 0 ? "bg-[#92928f]" : "bg-[#808080]"
                }`}
              >
                {t.count}
              </span>
            )}
          </button>
        ))}
      </div>
      <div className="flex min-h-0 flex-1 flex-col rounded-md rounded-tl-none bg-[#525252] p-[10px]">
        <div className="flex gap-[10px] text-white">
          <label className="flex h-[38px] w-[360px] items-center rounded-md bg-[#292929] pl-2 pr-2">
            <input aria-label="Search positions" className="min-w-0 flex-1 bg-transparent outline-none" />
            <Svg w={25} h={25} className="text-[#c8c8c8]">
              <circle cx="16" cy="9" r="7.500" />
              <path d="M10 15L2 23" strokeWidth="4" strokeLinecap="round" />
            </Svg>
          </label>
          <Select label="Direction filter" value="All directions (default)" className="w-[300px] bg-[#292929]" />
          <Select label="Aggregation" value="Not aggregated (default)" className="w-[300px] bg-[#292929]" />
          <button className="ml-auto flex h-[38px] items-center gap-4 rounded-lg bg-[#40914c] pl-[18px] pr-3">
            <Svg w={21} h={25}>
              <path d="M9 23.500H1V8L8 1H20V13M8 1V8H1M15 14V24M10 19H20" />
            </Svg>
            New order
          </button>
          <div className="flex h-[38px] overflow-hidden rounded-lg">
            <button disabled className="bg-[#4a704f] pl-3 pr-[10px] text-[#a6ada7]">
              Nothing to close
            </button>
            <button aria-label="Close options" className="flex w-10 items-center justify-center bg-[#40914c]">
              <Svg w={14} h={13}>
                <path d="M0 0H14L7 13Z" fill="currentColor" stroke="none" />
              </Svg>
            </button>
          </div>
        </div>
        <div className="mt-[10px] min-h-0 flex-1 rounded-md bg-[#292929] pt-[9px]">
          <table className="w-full table-fixed text-[#7c7c7c]">
            <colgroup>
              <col className="w-[335px]" />
              {columns.map((c) => (
                <col key={c} className="w-[180px]" />
              ))}
              <col />
            </colgroup>
            <thead>
              <tr className="h-[31px]">
                <th className="border-r-2 border-[#3f3f3f] pr-2 text-right font-normal">Created (UTC-4)</th>
                {columns.map((c, i) => (
                  <th key={c} className={`font-normal ${i < columns.length - 1 ? "border-r-2 border-[#3f3f3f]" : ""}`}>
                    {c}
                  </th>
                ))}
                <th />
              </tr>
            </thead>
          </table>
        </div>
        <div className="flex h-[60px] items-center pt-[10px]">
          {summary.map(([k, v], i) => (
            <div
              key={k}
              className={`flex h-[31px] items-center ${i === 0 ? "pl-[10px]" : "pl-5"} pr-5 ${
                i < summary.length - 1 ? "border-r-2 border-[#6c6c6c]" : ""
              }`}
            >
              <div className="flex min-w-[192px] gap-[11px] whitespace-nowrap">
                <span className="text-[#c0c0c2]">{k}</span>
                <span className="text-white">{v}</span>
              </div>
            </div>
          ))}
          <button aria-label="Summary settings" className="ml-auto mr-[6px] text-[#c8c8c8]">
            <GearIcon size={26} />
          </button>
        </div>
      </div>
    </section>
  );
}

/* ------------------------------------------------------------------ */
/* Right panel                                                         */
/* ------------------------------------------------------------------ */

function Card({ title, draggable, children }: { title: string; draggable?: boolean; children: React.ReactNode }) {
  return (
    <section className="shrink-0 rounded-md bg-[#525252] px-[10px] pb-[10px]">
      <div className="flex h-[60px] items-center text-[#c8c8c8]">
        {draggable && (
          <span className="mr-3">
            <Dots cols={2} rows={7} step={6} r={2} />
          </span>
        )}
        <h2 className="pb-[3px]">{title}</h2>
        <button
          aria-label={`Collapse ${title}`}
          className="ml-auto flex size-[38px] items-center justify-center rounded-md bg-[#6a6a6a] pb-1 text-[#d8d8d8]"
        >
          <ChevronUp />
        </button>
      </div>
      {children}
    </section>
  );
}

function CheckBox({ label }: { label: string }) {
  return (
    <label className="flex items-center gap-[10px]">
      <input type="checkbox" className="size-[30px] appearance-none rounded-md bg-[#1b1b1d]" />
      {label}
    </label>
  );
}

function OrderForm() {
  return (
    <form className="rounded-md bg-[#292929] p-5 text-white" onSubmit={(e) => e.preventDefault()}>
      <div className="flex h-[38px] items-center">
        <Svg w={21} h={16} className="ml-[9px] text-[#40914c]">
          <path d="M1 8L7 14.500L20 1" />
        </Svg>
        <span className="ml-[18px] pb-[2px]">Euro vs US Dollar</span>
        <span className="ml-auto pb-[2px] text-[#df6337]">-28.9 (-0.25%)</span>
        <button type="button" aria-label="Share" className="ml-5 flex size-[38px] items-center justify-center rounded-md bg-[#464646] text-[#d0d0d0]">
          <ShareIcon />
        </button>
      </div>
      <div role="tablist" className="mt-[10px] flex gap-[2px] overflow-hidden rounded-md">
        {["Market", "Limit", "Stop", "Stop-limit"].map((t) => (
          <button
            key={t}
            type="button"
            role="tab"
            aria-selected={t === "Limit"}
            className={`h-[45px] flex-auto border-b-2 pb-[2px] ${
              t === "Limit" ? "border-[#40914c] bg-[#3d3d3d]" : "border-[#494949] bg-[#494949]"
            }`}
          >
            {t}
          </button>
        ))}
      </div>
      <div className="mt-5 grid grid-cols-[324fr_316fr] gap-[10px]">
        <button type="button" className="h-[54px] rounded-[10px] border-2 border-[#df6337] bg-[#1b1b1d] text-[#df6337]">
          Sell
        </button>
        <button type="button" className="h-[54px] rounded-[10px] bg-[#1b1b1d] text-[#40914c]">
          Buy
        </button>
      </div>
      <div className="mt-[10px] grid grid-cols-[308fr_332fr] gap-[10px]">
        <span className="h-[10px] rounded-full bg-[#df6337]" />
        <span className="h-[10px] rounded-full bg-[#40914c]" />
      </div>
      <p className="mt-3 text-center">Spread: 0.1; High: 1.16579; Low: 1.16355</p>

      <div className="mt-[25px] grid grid-cols-2">
        <div>
          <label htmlFor="entry">Entry price</label>
          <div className="mt-[7px] flex h-[38px] w-[283px] items-center rounded-md bg-[#1b1b1d] pl-[10px] pr-1">
            <input id="entry" defaultValue="1.16573" className="min-w-0 flex-1 bg-transparent outline-none" />
            <Stepper />
          </div>
          <p className="mt-3">Distance: 1.3</p>
        </div>
        <div>
          <label htmlFor="quantity">Quantity</label>
          <div className="mt-[7px] flex items-center gap-[10px]">
            <div className="flex h-[38px] w-[233px] items-center gap-5 rounded-md bg-[#1b1b1d] pl-[10px] pr-2">
              <Stepper />
              <input id="quantity" defaultValue="1" className="min-w-0 flex-1 bg-transparent outline-none" />
              <Caret className="text-[#858585]" />
            </div>
            <span>Lots</span>
          </div>
          <p className="mt-3">Sell margin: ~1 165.61</p>
        </div>
      </div>

      <div className="mt-8 flex items-center gap-[10px]">
        <CheckBox label="Expiry" />
        <Select label="Expiry date" value="04/09/2025" disabled className="w-40 bg-[#242425] pl-[2px] text-[#6c6c6c]" />
        <div className="flex h-[38px] w-[107px] items-center rounded-md bg-[#242425] pl-[10px] pr-1">
          <input aria-label="Expiry time" defaultValue="20:25" disabled className="min-w-0 flex-1 bg-transparent text-[#6c6c6c]" />
          <Stepper className="text-[#5f5f5f]" />
        </div>
        <span className="ml-[3px]">UTC-4</span>
      </div>
      <div className="mt-[33px] flex items-center justify-between">
        <CheckBox label="Stop loss" />
        <div className="w-[227px]">
          <CheckBox label="Take profit" />
        </div>
      </div>

      <div className="relative mt-9">
        <textarea
          aria-label="Comment"
          placeholder="Comment"
          className="block h-[102px] w-full resize-none rounded-md bg-[#1b1b1d] px-[10px] pt-[10px] outline-none placeholder:text-[#7a7a7a]"
        />
        <span className="absolute bottom-[3px] right-[10px] text-[#7a7a7a]">0/100</span>
      </div>
      <button className="mt-[10px] h-[38px] w-full rounded-md bg-[#40914c]">Place order</button>
    </form>
  );
}

const bids: [number, string][] = [[1, "1.16560"], [5, "1.16557"], [10, "1.16555"], [30, "1.16552"], [50, "1.16547"]];
const asks: [number, string][] = [[1, "1.16561"], [5, "1.16564"], [10, "1.16566"], [30, "1.16569"], [50, "1.16573"]];

function Depth({ side, rows }: { side: "bid" | "ask"; rows: [number, string][] }) {
  const bid = side === "bid";
  return (
    <ul className="flex h-[394px] flex-1 flex-col gap-[10px] rounded-md bg-[#292929] p-[10px] text-white">
      {rows.map(([volume, price]) => (
        <li key={price} className={`relative flex h-[38px] items-center justify-between px-[10px] ${bid ? "" : "flex-row-reverse"}`}>
          <span
            className={`absolute inset-y-0 rounded-md ${bid ? "right-0 bg-[#df6337]" : "left-0 bg-[#40914c]"}`}
            style={{ width: `${volume * 2}%` }}
          />
          <span className="relative">{volume.toFixed(2)}</span>
          <span className="relative">{price}</span>
        </li>
      ))}
    </ul>
  );
}

function SymbolPanel() {
  const actions: [string, React.ReactNode][] = [
    ["Share symbol", <ShareIcon key="s" />],
    ["Add to favorites", <StarIcon key="f" />],
    ["Open chart", <ChartIcon key="c" />],
    ["Create alert", <BellIcon key="b" />],
  ];
  return (
    <aside className="mr-[10px] flex w-[776px] shrink-0 flex-col">
      <div role="tablist" className="flex gap-[10px]">
        {["Symbol", "DoM", "Notifications"].map((t, i) => (
          <button
            key={t}
            role="tab"
            aria-selected={i === 0}
            className={`h-[51px] rounded-t-md px-[10px] pb-[2px] ${
              i === 0 ? "bg-[#525252] text-white" : "bg-[#3d3d3d] text-[#b9b9b9]"
            }`}
          >
            {t}
          </button>
        ))}
      </div>
      <div className="flex min-h-0 flex-1 flex-col rounded-md rounded-tl-none bg-[#525252] p-[10px]">
        <div className="flex items-center gap-[10px]">
          <Select label="Symbol" value="EURUSD" className="mr-auto w-[368px] bg-[#292929] text-white" />
          {actions.map(([label, icon]) => (
            <button key={label} aria-label={label} className="flex size-[38px] items-center justify-center rounded-md bg-[#6a6a6a] text-[#d4d4d4]">
              {icon}
            </button>
          ))}
        </div>
        <div className="mt-[10px] flex min-h-0 flex-1 gap-[10px]">
          <div className="flex min-w-0 flex-1 flex-col gap-[10px] overflow-hidden rounded-md bg-[#292929] py-[10px] pl-[10px] pr-3">
            <Card title="New order">
              <OrderForm />
            </Card>
            <Card title="Depth of market (standard)" draggable>
              <div className="ml-[2px] flex gap-3">
                <Depth side="bid" rows={bids} />
                <Depth side="ask" rows={asks} />
              </div>
            </Card>
            <Card title="Symbol info" draggable>
              <dl className="rounded-md bg-[#292929] px-5 pt-[9px]">
                {[
                  ["Base asset", "EUR"],
                  ["Quote asset", "USD"],
                ].map(([k, v]) => (
                  <div key={k} className="flex h-[53px] items-center justify-between border-b-2 border-[#474747]">
                    <dt className="text-[#b9b9b9]">{k}</dt>
                    <dd className="text-white">{v}</dd>
                  </div>
                ))}
              </dl>
            </Card>
          </div>
          <div className="flex w-[14px] flex-col items-center gap-1 pb-[2px] pt-[3px] text-[#808080]">
            <Svg w={14} h={14}>
              <path d="M0 14H14L7 0Z" fill="currentColor" stroke="none" />
            </Svg>
            <div className="min-h-0 w-full flex-1">
              <div className="h-[35%] rounded-full bg-[#808080]" />
            </div>
            <Svg w={14} h={14}>
              <path d="M0 0H14L7 14Z" fill="currentColor" stroke="none" />
            </Svg>
          </div>
        </div>
      </div>
    </aside>
  );
}

/* ------------------------------------------------------------------ */
/* Page                                                                */
/* ------------------------------------------------------------------ */

function StatusBar() {
  return (
    <footer className="flex h-[58px] shrink-0 items-center pl-[10px] pr-5 text-[#b9b9b9]">
      <span className="mr-[10px] size-[10px] rounded-full bg-[#3a7a45]" />
      <span>Trading sessions: Wellington, Tokyo, Sydney, Singapore</span>
      <span className="ml-auto">Current time:</span>
      <button className="ml-[18px] flex items-center gap-[11px] text-white">
        UTC-4
        <Caret />
      </button>
      <span className="ml-4 text-white">20:13 04.09.2025</span>
      <span className="ml-[10px] h-[26px] w-[2px] bg-[#3f3f3f]" />
      <label className="ml-5 flex items-center gap-[10px] text-[18px] text-white">
        ON
        <input type="checkbox" role="switch" className="h-[26px] w-10 appearance-none rounded-md bg-[#525252]" />
      </label>
      <span className="ml-5 h-[26px] w-[2px] bg-[#3f3f3f]" />
      <span className="ml-5 flex gap-[10px]">
        <span>39 ms</span>
        <span>/</span>
        <span>39 ms</span>
      </span>
    </footer>
  );
}

export default function App() {
  return (
    <div className="flex h-screen border-t border-black bg-[#292929] font-['Liberation_Sans',Arial,sans-serif] text-[22px] leading-[26px]">
      <Sidebar />
      <div className="flex min-w-0 flex-1 flex-col">
        <TopBar />
        <main className="flex min-h-0 flex-1">
          <div className="flex min-w-0 flex-1 flex-col pl-[10px]">
            <div className="flex">
              <div className="flex min-w-0 flex-1 flex-col gap-[10px]">
                {charts.map((c, i) => (
                  <ChartWindow key={c.symbol} c={c} active={i === 0} />
                ))}
              </div>
              <div className="ml-[10px] flex">
                <ToolPalette />
              </div>
              <div className="flex w-[10px] items-center justify-center pb-[6px] text-[#858585]">
                <Svg w={6} h={52}>
                  <path d="M1 0V10M5 0V10M1 42V52M5 42V52" />
                  <path d="M0 20V32L6 26Z" fill="currentColor" stroke="none" />
                </Svg>
              </div>
            </div>
            <div className="flex h-[10px] items-center justify-center pr-[88px] text-[#858585]">
              <Svg w={52} h={6}>
                <path d="M0 1H10M0 5H10M42 1H52M42 5H52" />
                <path d="M20 0H32L26 6Z" fill="currentColor" stroke="none" />
              </Svg>
            </div>
            <TradeWatch />
          </div>
          <SymbolPanel />
        </main>
        <StatusBar />
      </div>
    </div>
  );
}
